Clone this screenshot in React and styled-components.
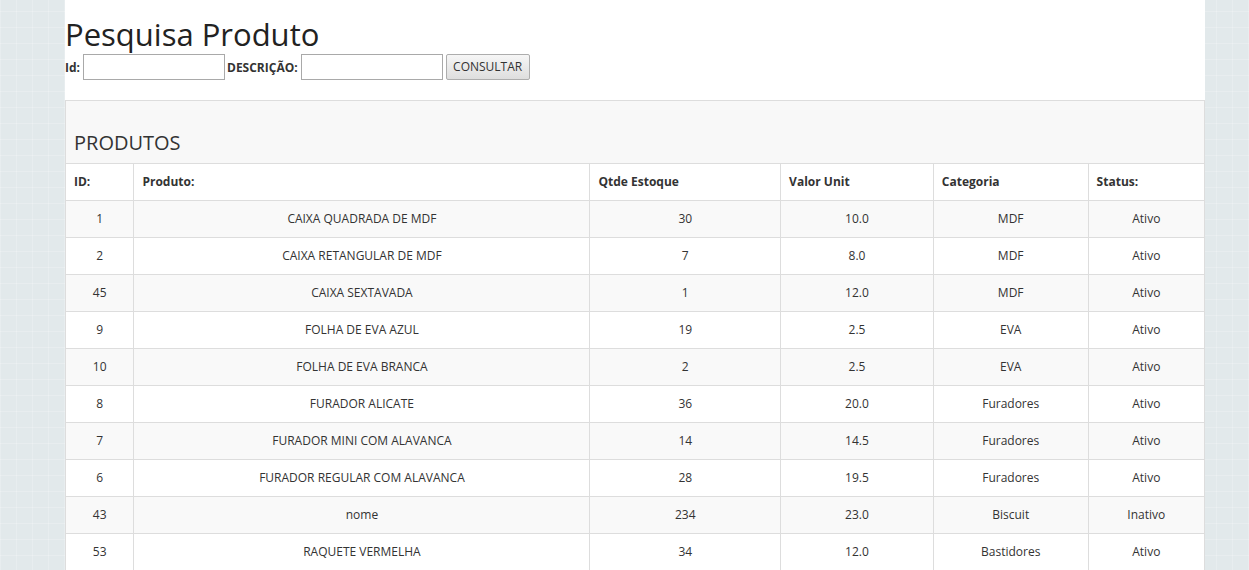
import React from 'react'
import styled, { createGlobalStyle } from 'styled-components'

const GlobalStyle = createGlobalStyle`
  html, body {
    margin: 0;
    padding: 0;
  }
  body {
    font-family: 'Open Sans', 'Liberation Sans', sans-serif;
    color: #333;
    background-color: #e2e9eb;
    background-image:
      repeating-linear-gradient(0deg, rgba(255,255,255,0.2) 0 1px, transparent 1px 16px),
      repeating-linear-gradient(90deg, rgba(255,255,255,0.2) 0 1px, transparent 1px 16px);
  }
`

const Page = styled.div`
  width: 1140px;
  margin-left: 65px;
  min-height: 570px;
  background: #fff;
`

const Title = styled.h1`
  margin: 0;
  padding-top: 14px;
  font-size: 31px;
  font-weight: 400;
  line-height: 40px;
  color: #222;
`

const SearchForm = styled.form`
  display: flex;
  align-items: center;
  height: 26px;
  margin-bottom: 20px;
`

const Label = styled.label`
  font-size: 12px;
  font-weight: 700;
  margin-right: 3px;
`

const Input = styled.input`
  box-sizing: border-box;
  width: 142px;
  height: 26px;
  margin: 0 2px 0 0;
  border: 1px solid #a9a9a9;
  background: #fff;
`

const Button = styled.button`
  box-sizing: border-box;
  height: 26px;
  width: 84px;
  margin-left: 1px;
  padding: 0 0 2px;
  border: 1px solid #adadad;
  border-radius: 2px;
  background: linear-gradient(#f6f6f6, #dedede);
  font-family: inherit;
  font-size: 12px;
  color: #333;
`

const Panel = styled.div`
  border: 1px solid #ddd;
  background: #f8f8f8;
`

const PanelTitle = styled.h3`
  margin: 0;
  padding: 28px 8px 6px;
  font-size: 20px;
  font-weight: 400;
  line-height: 28px;
  color: #333;
`

const Table = styled.table`
  width: 100%;
  border-collapse: collapse;
  font-size: 12px;
`

const Th = styled.th`
  box-sizing: border-box;
  text-align: left;
  font-weight: 700;
  padding: 8px;
  line-height: 20px;
  border: 1px solid #ddd;
  border-left: ${(p) => (p.$first ? 'none' : '1px solid #ddd')};
  border-right: ${(p) => (p.$last ? 'none' : '1px solid #ddd')};
  width: ${(p) => p.$w}px;
`

const Row = styled.tr`
  background: ${(p) => (p.$odd ? '#f9f9f9' : '#fff')};
`

const Td = styled.td`
  text-align: center;
  padding: 8px;
  line-height: 20px;
  border: 1px solid #ddd;
  &:first-child {
    border-left: none;
  }
  &:last-child {
    border-right: none;
  }
`

const columns = [
  { label: 'ID:', w: 68 },
  { label: 'Produto:', w: 457 },
  { label: 'Qtde Estoque', w: 191 },
  { label: 'Valor Unit', w: 153 },
  { label: 'Categoria', w: 155 },
  { label: 'Status:', w: 116 },
]

const produtos = [
  [1, 'CAIXA QUADRADA DE MDF', 30, '10.0', 'MDF', 'Ativo'],
  [2, 'CAIXA RETANGULAR DE MDF', 7, '8.0', 'MDF', 'Ativo'],
  [45, 'CAIXA SEXTAVADA', 1, '12.0', 'MDF', 'Ativo'],
  [9, 'FOLHA DE EVA AZUL', 19, '2.5', 'EVA', 'Ativo'],
  [10, 'FOLHA DE EVA BRANCA', 2, '2.5', 'EVA', 'Ativo'],
  [8, 'FURADOR ALICATE', 36, '20.0', 'Furadores', 'Ativo'],
  [7, 'FURADOR MINI COM ALAVANCA', 14, '14.5', 'Furadores', 'Ativo'],
  [6, 'FURADOR REGULAR COM ALAVANCA', 28, '19.5', 'Furadores', 'Ativo'],
  [43, 'nome', 234, '23.0', 'Biscuit', 'Inativo'],
  [53, 'RAQUETE VERMELHA', 34, '12.0', 'Bastidores', 'Ativo'],
]

const App = () => (
  <>
    <GlobalStyle />
    <Page>
      <Title>Pesquisa Produto</Title>
      <SearchForm onSubmit={(e) => e.preventDefault()}>
        <Label htmlFor="id">Id:</Label>
        <Input id="id" type="text" />
        <Label htmlFor="descricao">DESCRIÇÃO:</Label>
        <Input id="descricao" type="text" />
        <Button type="submit">CONSULTAR</Button>
      </SearchForm>
      <Panel>
        <PanelTitle>PRODUTOS</PanelTitle>
        <Table>
          <thead>
            <Row>
              {columns.map((c, i) => (
                <Th
                  key={c.label}
                  $w={c.w}
                  $first={i === 0}
                  $last={i === columns.length - 1}
                >
                  {c.label}
                </Th>
              ))}
            </Row>
          </thead>
          <tbody>
            {produtos.map((p, i) => (
              <Row key={p[0]} $odd={i % 2 === 0}>
                {p.map((v, j) => (
                  <Td key={j}>{v}</Td>
                ))}
              </Row>
            ))}
          </tbody>
        </Table>
      </Panel>
    </Page>
  </>
)

export default App
